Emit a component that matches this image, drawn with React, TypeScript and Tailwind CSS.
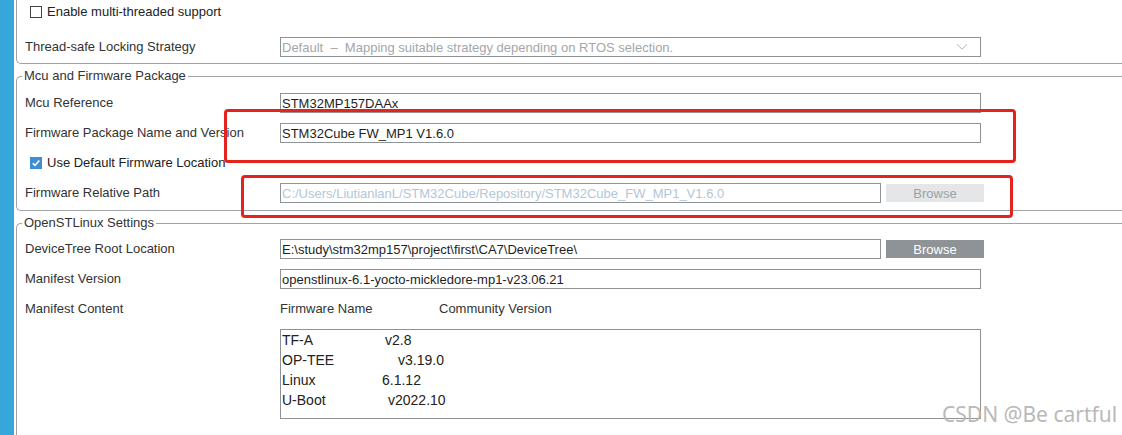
import React from 'react';

const labelCls = 'w-[255px] shrink-0 text-[13px] text-[#333]';

const Row = ({ label, children }: { label: string; children: React.ReactNode }) => (
  <div className="flex h-[30px] items-center">
    <div className={labelCls}>{label}</div>
    {children}
  </div>
);

const TextBox = ({ value, wide = true, disabled = false }: { value: string; wide?: boolean; disabled?: boolean }) => (
  <div
    className={`flex h-[20px] items-center border border-[#8d9397] bg-white pl-[1px] text-[13px] leading-none ${
      wide ? 'w-[701px]' : 'w-[601px]'
    } ${disabled ? 'text-[#b3c6d8]' : 'text-[#1e1e1e]'}`}
  >
    {value}
  </div>
);

const BrowseButton = ({ disabled = false }: { disabled?: boolean }) => (
  <button
    className={`ml-[5px] h-[18px] w-[98px] text-[13px] leading-none ${
      disabled ? 'bg-[#e4e6e8] text-[#9ba1a6]' : 'bg-[#8d9397] text-white'
    }`}
  >
    Browse
  </button>
);

const CheckBox = ({ checked, label }: { checked: boolean; label: string }) => (
  <div className="flex items-center pl-[13px]">
    {checked ? (
      <span className="flex h-[12px] w-[12px] items-center justify-center bg-[#3d8fd1]">
        <svg width="10" height="10" viewBox="0 0 10 10">
          <path d="M1.8 5.2 L4 7.4 L8.3 2.4" fill="none" stroke="white" strokeWidth="1.6" />
        </svg>
      </span>
    ) : (
      <span className="h-[12px] w-[12px] border border-[#444] bg-white" />
    )}
    <span className="ml-[5px] text-[13px] text-[#222]">{label}</span>
  </div>
);

const Group = ({ title, children, className = '' }: { title: string; children: React.ReactNode; className?: string }) => (
  <fieldset className={`-mr-[4px] rounded-l-[5px] border border-r-0 border-[#9fa3a6] pl-[8px] ${className}`}>
    <legend className="-ml-[3px] px-[2px] text-[13px] leading-[16px] text-[#333]">{title}</legend>
    {children}
  </fieldset>
);

const manifest = [
  { name: 'TF-A', w: 'w-[103px]', version: 'v2.8' },
  { name: 'OP-TEE', w: 'w-[116px]', version: 'v3.19.0' },
  { name: 'Linux', w: 'w-[100px]', version: '6.1.12' },
  { name: 'U-Boot', w: 'w-[106px]', version: 'v2022.10' },
];

export default function App() {
  return (
    <div
      className="relative flex h-[435px] w-[1122px] overflow-hidden bg-white"
      style={{ fontFamily: '"Liberation Sans", Arial, sans-serif' }}
    >
      <div className="w-[14px] shrink-0 bg-[#37a6db]" />
      <div className="ml-[2px] flex-1">
        {/* previous group (cut off at the top) */}
        <div className="-mr-[4px] rounded-bl-[5px] border-b border-l border-[#9fa3a6] pb-[1px] pl-[8px]">
          <div className="flex h-[24px] items-center -ml-[8px]">
            <CheckBox checked={false} label="Enable multi-threaded support" />
          </div>
          <div className="mt-[8px]">
            <Row label="Thread-safe Locking Strategy">
              <div className="flex h-[20px] w-[701px] items-center justify-between border border-[#8d9397] pl-[1px] pr-[12px] text-[13px] leading-none text-[#a3a7ab]">
                <span>Default&nbsp; –&nbsp; Mapping suitable strategy depending on RTOS selection.</span>
                <svg width="12" height="8" viewBox="0 0 12 8">
                  <path d="M1 1.5 L6 6 L11 1.5" fill="none" stroke="#b5b9bc" strokeWidth="1" />
                </svg>
              </div>
            </Row>
          </div>
        </div>

        <Group title="Mcu and Firmware Package" className="mt-[4px] pb-[2px]">
          <div className="pt-[4px]">
            <Row label="Mcu Reference">
              <TextBox value="STM32MP157DAAx" />
            </Row>
            <Row label="Firmware Package Name and Version">
              <TextBox value="STM32Cube FW_MP1 V1.6.0" />
            </Row>
            <div className="flex h-[30px] items-center -ml-[8px]">
              <CheckBox checked label="Use Default Firmware Location" />
            </div>
            <Row label="Firmware Relative Path">
              <TextBox value="C:/Users/LiutianlanL/STM32Cube/Repository/STM32Cube_FW_MP1_V1.6.0" wide={false} disabled />
              <BrowseButton disabled />
            </Row>
          </div>
        </Group>

        <Group title="OpenSTLinux Settings" className="mt-[4px] pb-[40px]">
          <div className="pt-[3px]">
            <Row label="DeviceTree Root Location">
              <TextBox value="E:\study\stm32mp157\project\first\CA7\DeviceTree\" wide={false} />
              <BrowseButton />
            </Row>
            <Row label="Manifest Version">
              <TextBox value="openstlinux-6.1-yocto-mickledore-mp1-v23.06.21" />
            </Row>
            <div className="flex">
              <div className={`${labelCls} flex h-[30px] items-center`}>Manifest Content</div>
              <div className="flex flex-col">
                <div className="flex h-[30px] items-center text-[13px] text-[#333]">
                  <span className="w-[159px]">Firmware Name</span>
                  <span>Community Version</span>
                </div>
                <div className="mt-[5px] h-[90px] w-[701px] border border-[#8d9397] pl-[1px] text-[14px] leading-[20px] text-[#222]">
                  {manifest.map((m) => (
                    <div key={m.name} className="flex">
                      <span className={`${m.w} shrink-0`}>{m.name}</span>
                      <span>{m.version}</span>
                    </div>
                  ))}
                </div>
              </div>
            </div>
          </div>
        </Group>
      </div>

      {/* annotation highlights */}
      <div className="pointer-events-none absolute left-[224px] top-[109px] h-[54px] w-[792px] rounded-[4px] border-[3px] border-[#e4231f]" />
      <div className="pointer-events-none absolute left-[241px] top-[175px] h-[43px] w-[772px] rounded-[4px] border-[3px] border-[#e4231f]" />

      <div
        className="pointer-events-none absolute left-[942px] top-[404px] text-[21px] leading-[21px] text-[#b9b9b9]"
        style={{ fontFamily: '"Noto Sans", sans-serif' }}
      >
        CSDN @Be cartful
      </div>
    </div>
  );
}
